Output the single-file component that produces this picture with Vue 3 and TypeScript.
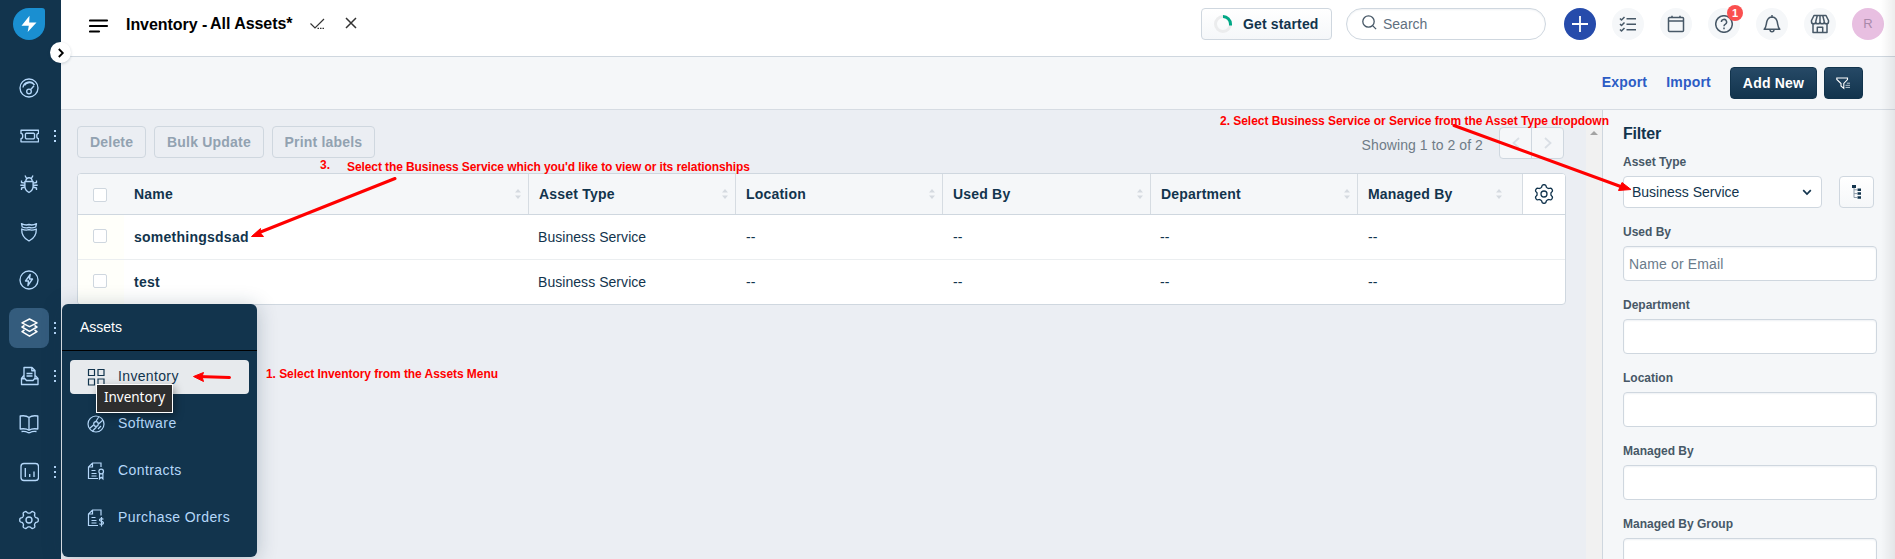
<script setup lang="ts">
interface NavItem {
  name: string
  paths: string[]
  dots?: boolean
  active?: boolean
}
interface MenuItem {
  label: string
  paths: string[]
  active?: boolean
}

// Six-lobed gear outline centred in a 20x20 box.
function gearPath(turn: number): string {
  const points: string[] = []
  for (let i = 0; i < 120; i++) {
    const a = (i / 120) * Math.PI * 2
    const r = 8.1 + 1.2 * Math.tanh(2 * Math.cos(6 * (a - turn)))
    points.push(`${(10 + r * Math.cos(a)).toFixed(2)} ${(10 + r * Math.sin(a)).toFixed(2)}`)
  }
  return `M${points.join('L')}z`
}
const gear = gearPath(Math.PI / 6)
const gearSide = gearPath(0)
const gearHub = 'M13 10a3 3 0 1 1-6 0a3 3 0 1 1 6 0z'

const nav: NavItem[] = [
  {
    name: 'dashboard',
    paths: [
      'M19 10a9 9 0 1 1-18 0a9 9 0 1 1 18 0z',
      'M4 9.5a6.2 6.2 0 0 1 11.5-2.4M5.5 7.5A6 6 0 0 1 14 5.6',
      'M12.3 13.4a2.3 2.3 0 1 1-4.6 0a2.3 2.3 0 1 1 4.6 0zM11.6 11.7l3.4-3.9',
    ],
  },
  {
    name: 'tickets',
    dots: true,
    paths: [
      'M2 4.2h17.500v3.2a1.6 2.4 0 0 0 0 5.2v3.2H2v-3.2a1.6 2.4 0 0 0 0-5.2z',
      'M7.200 7.2h7.500l.8.8v4l-.8.8H7.200l-.8-.8V8z',
    ],
  },
  {
    name: 'problems',
    paths: [
      'M5.9 7.5h8.200v5c0 2.500-1.900 4.800-4.100 6-2.200-1.200-4.100-3.500-4.100-6z',
      'M6.800 7.300a3.200 3.600 0 0 1 6.400 0M6 1.500l1.600 3M14 1.500l-1.600 3',
      'M5.900 9.200L2.500 8.500V6.500M5.900 11.200H1.300M5.900 13L2.500 14v2M14.100 9.200l3.400-.7v-2M14.100 11.200h4.600M14.100 13l3.400 1v2',
    ],
  },
  {
    name: 'changes',
    paths: [
      'M2.500 1.700q4 2 7.500.800q3.500 1.200 7.500-.800l-.8 3.300q-3.500 1.500-6.700.4q-3.200 1.100-6.700-.4z',
      'M2.700 7q3.800 1.800 7.300.700q3.500 1.100 7.300-.700c.2 5-2.300 9.500-7.300 12c-5-2.500-7.500-7-7.300-12z',
    ],
  },
  {
    name: 'releases',
    paths: [
      'M19 10a9 9 0 1 1-18 0a9 9 0 1 1 18 0z',
      'M11.200 4.500L6.500 11h3l-.6 4.500L13.500 9h-3z',
    ],
  },
  {
    name: 'assets',
    dots: true,
    active: true,
    paths: [
      'M10.500 1l7.500 3.800l-7.500 3.800L3 4.800z',
      'M5.500 7.500L3 9l7.500 4.300L18 9l-2.500-1.500',
      'M5.500 12L3 13.600l7.500 4.600l7.500-4.600L15.500 12',
    ],
  },
  {
    name: 'printing',
    dots: true,
    paths: [
      'M5 12V1.500h8l3 3V12M12.800 1.700v3h3',
      'M4.800 9.500L2.500 12.500v6h16.500v-6L16.200 9.500M2.500 12.700H6l1.500 1.800h6.500l1.500-1.800H19',
      'M7.500 7.500h6M7.500 10h6',
    ],
  },
  {
    name: 'solutions',
    paths: [
      'M10 3.500C8 1.800 4.500 1.500 1.200 2v13c3.300-.5 6.800-.2 8.800 1.300c2-1.500 5.500-1.800 8.800-1.300V2C15.500 1.500 12 1.800 10 3.500zM10 3.500V16',
      'M2.500 17.500q4-.5 6 .8q1.500.8 3 0q2-1.300 6-.8',
    ],
  },
  {
    name: 'reports',
    dots: true,
    paths: [
      'M5 1.500h11.500a3 3 0 0 1 3 3v11a3 3 0 0 1-3 3H5a3 3 0 0 1-3-3v-11a3 3 0 0 1 3-3z',
      'M6.300 6v9M10.700 12v3M15 9.500V15',
    ],
  },
  { name: 'admin', paths: [gearSide, gearHub] },
]

const menu: MenuItem[] = [
  {
    label: 'Inventory',
    active: true,
    paths: ['M2.500 2.500H8.500v6H2.500zM12 2.500h6v6h-6zM2.500 12h6v6H2.500zM12 12h6v6h-6z'],
  },
  {
    label: 'Software',
    paths: [
      'M18 10a8 8 0 1 1-16 0a8 8 0 1 1 16 0z',
      'M3.500 14.500l4-3.500M6.500 17l4-4M9.500 8L13 2.500M12.500 10l4.500-4M12 15l3-3',
      'M12.300 10a2.300 2.300 0 1 1-4.600 0a2.300 2.300 0 1 1 4.600 0z',
    ],
  },
  {
    label: 'Contracts',
    paths: [
      'M12 17.500H2.500V6L6.500 2h8.500v4M6.500 2v4H2.500M5.500 9.500h4M5.500 12.500h5M5.500 15h5',
      'M17.500 10.500a2.300 2.300 0 1 1-4.600 0a2.300 2.300 0 1 1 4.600 0zM13.500 12.800v5l1.700-1.500l1.700 1.500v-5',
    ],
  },
  {
    label: 'Purchase Orders',
    paths: [
      'M12 17.500H2.500V6L6.500 2h8.500v5.500M6.500 2v4H2.500M5.500 9.500h4M5.500 12.500h5M5.500 15h5',
      'M17.500 11.300q-2.500-1.300-3.800 0q-.7 1.500 1.900 2.100q2.500.7 1.600 2.300q-1.500 1.300-3.800 0M15.500 9v9.500',
    ],
  },
]

const columns = ['Name', 'Asset Type', 'Location', 'Used By', 'Department', 'Managed By']
const rows = [
  ['somethingsdsad', 'Business Service', '--', '--', '--', '--'],
  ['test', 'Business Service', '--', '--', '--', '--'],
]
const bulkActions = ['Delete', 'Bulk Update', 'Print labels']
const filters = [
  { label: 'Used By', placeholder: 'Name or Email' },
  { label: 'Department', placeholder: '' },
  { label: 'Location', placeholder: '' },
  { label: 'Managed By', placeholder: '' },
  { label: 'Managed By Group', placeholder: '' },
]
</script>

<template>
  <div class="app">
    <aside class="sidebar">
      <svg class="logo" width="32" height="32" viewBox="0 0 32 32">
        <path d="M16 0h13a3 3 0 0 1 3 3v13a16 16 0 1 1-16-16z" fill="#1a8fd1" />
        <path d="M16.500 7.800L8.500 17.800h7.300L14.700 24L23.500 14.500h-7.300z" fill="#fff" />
      </svg>
      <nav>
        <div v-for="n in nav" :key="n.name" class="nav-item">
          <span class="nav-box" :class="{ active: n.active }">
            <svg width="20" height="20" viewBox="0 0 20 20"><path v-for="d in n.paths" :key="d" :d="d" /></svg>
          </span>
          <span v-if="n.dots" class="dots"><i /><i /><i /></span>
        </div>
      </nav>
    </aside>

    <div class="main">
      <header class="topbar">
        <svg class="burger" width="20" height="14" viewBox="0 0 20 14">
          <path d="M1 1.500h17M1 7h17M1 12.500h9" stroke="#000" stroke-width="2.200" stroke-linecap="round" />
        </svg>
        <h1>Inventory - <span>All Assets*</span></h1>
        <svg class="tick" width="15" height="12" viewBox="0 0 15 12">
          <path d="M.5 5.500l4.500 4.500L14 1" fill="none" stroke="#333" stroke-width="1.200" />
          <path d="M7.500 10.300h7" stroke="#333" stroke-width="1.200" stroke-dasharray="1.500 1" />
        </svg>
        <svg class="cross" width="12" height="12" viewBox="0 0 12 12">
          <path d="M1 1l10 10M11 1L1 11" stroke="#333" stroke-width="1.500" />
        </svg>
        <div class="grow" />
        <button class="started">
          <svg width="18" height="18" viewBox="0 0 18 18">
            <circle cx="9" cy="9" r="7.500" fill="none" stroke="#ebeced" stroke-width="3" />
            <path d="M9 1.500A7.500 7.500 0 0 1 16.500 9v1.500" fill="none" stroke="#00a886" stroke-width="3" />
          </svg>
          Get started
        </button>
        <div class="search">
          <svg width="15" height="15" viewBox="0 0 15 15">
            <circle cx="6.500" cy="6.500" r="5.700" fill="none" stroke="#475867" stroke-width="1.300" />
            <path d="M10.600 10.600l3.500 3.500" stroke="#475867" stroke-width="1.300" />
          </svg>
          Search
        </div>
        <div class="rounds">
          <span class="round plus">
            <svg width="18" height="18" viewBox="0 0 18 18"><path d="M9 1v16M1 9h16" /></svg>
          </span>
          <span class="round">
            <svg width="18" height="18" viewBox="0 0 18 18">
              <path d="M1 3.500l1.500 1.500L5.500 2M1 9l1.500 1.500L5.500 7.500M1 14.500L2.500 16l3-3M7.500 3.800H17M7.500 9.300H17M7.500 14.800H17" />
            </svg>
          </span>
          <span class="round">
            <svg width="18" height="18" viewBox="0 0 18 18">
              <path d="M2.500 2.500h13a1 1 0 0 1 1 1v12a1 1 0 0 1-1 1h-13a1 1 0 0 1-1-1v-12a1 1 0 0 1 1-1zM1.500 6h15M5 .8V3M13 .8V3" />
            </svg>
          </span>
          <span class="round">
            <svg width="18" height="18" viewBox="0 0 18 18">
              <path d="M17.300 9A8.300 8.300 0 1 1 .7 9A8.300 8.300 0 1 1 17.300 9zM6.400 7a2.600 2.600 0 1 1 3.800 2.300q-1.200.6-1.200 1.900M9 12.500v1.800" />
            </svg>
            <b class="badge">1</b>
          </span>
          <span class="round">
            <svg width="18" height="18" viewBox="0 0 18 18">
              <path d="M1.200 14.300h15.600C14.500 12 15 9 14 6Q12.800 2.200 9 2Q5.200 2.200 4 6C3 9 3.500 12 1.200 14.300zM9 0v2M7 14.500q0 2.300 2 2.300t2-2.300" />
            </svg>
          </span>
          <span class="round">
            <svg width="20" height="20" viewBox="0 0 20 20">
              <path d="M4 1.500h12l2.500 5v1.200a2.100 2.100 0 0 1-4.250 0a2.100 2.100 0 0 1-4.250 0a2.100 2.100 0 0 1-4.250 0a2.100 2.100 0 0 1-4.250 0V6.500zM3 10v8.500h14V10M7.300 18.500v-5.300h5.400v5.300M7.300 1.500L5.750 7.500M12.700 1.500l1.550 6M10 1.500v6" />
            </svg>
          </span>
          <span class="round avatar">R</span>
        </div>
      </header>

      <div class="toolbar">
        <a>Export</a>
        <a>Import</a>
        <button class="dark add">Add New</button>
        <button class="dark funnel">
          <svg width="15" height="13" viewBox="0 0 15 13">
            <path d="M.8 1h10.700v1.500L7.800 6.500v4.800L5 9V6.500L.8 2.500z" fill="none" stroke="#fff" stroke-width="1.100" />
            <path d="M10.800 6.200H14M9.500 8.300H14M9.500 10.400H14" fill="none" stroke="#b9c6d1" />
          </svg>
        </button>
      </div>

      <div class="body">
        <section class="content">
          <div class="actions">
            <button v-for="a in bulkActions" :key="a">{{ a }}</button>
            <div class="grow" />
            <span class="count">Showing 1 to 2 of 2</span>
            <div class="pager">
              <span><svg width="8" height="12" viewBox="0 0 8 12"><path d="M7 1L1.500 6L7 11" /></svg></span>
              <span><svg width="8" height="12" viewBox="0 0 8 12"><path d="M1 1l5.500 5L1 11" /></svg></span>
            </div>
          </div>
          <div class="table">
            <div class="tr head">
              <div class="check"><i /></div>
              <div v-for="c in columns" :key="c" class="th">
                {{ c }}
                <svg width="6" height="12" viewBox="0 0 6 12"><path d="M0 4.500L3 1l3 3.500zM0 7.500L3 11l3-3.500z" fill="#d5dae0" /></svg>
              </div>
              <div class="cog">
                <svg width="20" height="20" viewBox="0 0 20 20">
                  <path :d="gear" /><path :d="gearHub" />
                </svg>
              </div>
            </div>
            <div v-for="r in rows" :key="r[0]" class="tr">
              <div class="check"><i /></div>
              <div v-for="(v, i) in r" :key="i" class="td">{{ v }}</div>
              <div />
            </div>
          </div>
        </section>
        <div class="scrollbar"><i /></div>
        <aside class="filter">
          <h2>Filter</h2>
          <label>Asset Type</label>
          <div class="select-row">
            <div class="select">
              Business Service
              <svg width="10" height="7" viewBox="0 0 10 7"><path d="M1.200 1.200L5 5l3.800-3.800" fill="none" stroke="#12344d" stroke-width="1.700" /></svg>
            </div>
            <button class="tree">
              <svg width="11" height="14" viewBox="0 0 11 14">
                <path d="M0 0h4v3H0zM5.500 3.500H9v2.500H5.500zM5.500 7.300H9v2.500H5.500zM5.500 11.200H9v2.500H5.500z" fill="#12344d" />
                <path d="M2 3v9.500h3.500M2 4.800h3.500M2 8.600h3.500" fill="none" stroke="#8d9ba8" />
              </svg>
            </button>
          </div>
          <template v-for="f in filters" :key="f.label">
            <label>{{ f.label }}</label>
            <div class="input">{{ f.placeholder }}</div>
          </template>
        </aside>
      </div>
    </div>

    <div class="expand">
      <svg width="8" height="10" viewBox="0 0 8 10"><path d="M1.800 1l4 4l-4 4" fill="none" stroke="#000" stroke-width="1.800" /></svg>
    </div>

    <div class="flyout">
      <div class="fly-title">Assets</div>
      <div class="fly-list">
        <div v-for="m in menu" :key="m.label" class="fly-item" :class="{ on: m.active }">
          <svg width="20" height="20" viewBox="0 0 20 20"><path v-for="d in m.paths" :key="d" :d="d" /></svg>
          {{ m.label }}
        </div>
      </div>
    </div>
    <div class="tooltip">Inventory</div>

    <svg class="notes" width="1895" height="559" viewBox="0 0 1895 559">
      <g>
        <text x="266" y="378" textLength="232">1. Select Inventory from the Assets Menu</text>
        <text x="1220" y="125" textLength="389">2. Select Business Service or Service from the Asset Type dropdown</text>
        <text x="320" y="169">3.</text>
        <text x="347" y="171" textLength="403">Select the Business Service which you'd like to view or its relationships</text>
      </g>
      <path class="line" d="M229.500 377.500L198 376.500M395 178.500L258 233M1454 125.500L1622 187" />
      <path class="tip" d="M193.500 376.500L203.500 372.500L202 376.500L203.500 381.500zM251.500 236.500L260.500 228.500L260 232.500L263.500 236.500zM1631 189.500L1622 182.500L1618.500 190.500z" />
    </svg>
    <div class="edge" />
  </div>
</template>

<style>
body { margin: 0; overflow: hidden; }
</style>

<style scoped>
* { box-sizing: border-box; }
.app {
  position: relative; display: flex; width: 1895px; height: 559px; overflow: hidden;
  font: 14px/20px "Liberation Sans", Arial, sans-serif; color: #12344d; background: #ebeef3;
}
button { font: inherit; font-weight: 700; color: inherit; margin: 0; letter-spacing: .2px; }
svg { display: block; flex: none; }
.grow { flex: 1; }
.sidebar { width: 61px; flex: none; background: #12344d; padding-top: 8px; }
.logo { margin-left: 13px; }
nav { margin-top: 24px; }
.nav-item { height: 48px; display: flex; align-items: center; padding-left: 9px; }
.nav-box { width: 40px; height: 40px; border-radius: 8px; display: flex; align-items: center; justify-content: center; }
.nav-box svg { fill: none; stroke: #b5d8fa; stroke-width: 1.35; stroke-linejoin: round; }
.nav-box.active { background: #345c7d; }
.nav-box.active svg { stroke: #fff; stroke-width: 1.5; }
.dots { margin-left: 5px; display: flex; flex-direction: column; gap: 3px; }
.dots i { width: 2px; height: 2px; background: #b5d8fa; }
.main { flex: 1; min-width: 0; display: flex; flex-direction: column; }
.topbar { height: 57px; flex: none; background: #fff; border-bottom: 1px solid #cfd7df; display: flex; align-items: flex-start; padding: 8px 11px 0 27px; }
.burger { margin: 11px 0 0 1px; }
h1 { margin: 7px 0 0 17px; width: 181px; font-size: 16px; line-height: 20px; letter-spacing: -.05px; color: #000; white-space: nowrap; }
h1 span { position: relative; top: -1px; left: -1px; }
.tick { margin: 10px 0 0 3px; }
.cross { margin: 9px 0 0 20px; }
.started { width: 131px; height: 32px; border: 1px solid #cfd7df; border-radius: 4px; background: linear-gradient(#fff, #f5f7f9); padding: 0 0 0 12px; display: flex; align-items: center; gap: 11px; white-space: nowrap; letter-spacing: .15px; }
.search { margin-left: 14px; width: 200px; height: 32px; border: 1px solid #cfd7df; border-radius: 16px; display: flex; align-items: center; padding-left: 15px; gap: 6px; color: #5f7080; box-shadow: inset 0 1px 2px #f0f2f4; }
.search svg { margin-top: -3px; }
.rounds { margin-left: 18px; display: flex; gap: 16px; }
.round { position: relative; width: 32px; height: 32px; border-radius: 50%; background: #f5f7f9; display: flex; align-items: center; justify-content: center; }
.round svg { fill: none; stroke: #475867; stroke-width: 1.5; stroke-linejoin: round; }
.plus { background: #264bab; }
.plus svg { stroke: #fff; stroke-width: 1.8; }
.avatar { background: #e8bfe1; color: #a98aab; font-size: 13px; }
.badge { position: absolute; top: -3px; left: 19px; width: 16px; height: 16px; border-radius: 50%; background: #fa4f4f; color: #fff; font-size: 11px; line-height: 16px; text-align: center; }
.toolbar { height: 53px; flex: none; background: #f5f7f9; border-bottom: 1px solid #d6dce3; display: flex; align-items: center; justify-content: flex-end; padding-right: 32px; }
.toolbar a { color: #2c5cc5; font-weight: 700; letter-spacing: .2px; margin-right: 19px; position: relative; top: -1px; }
.dark { height: 32px; border: 1px solid #12344d; border-radius: 4px; background: linear-gradient(#264966, #12344d); color: #fff; display: flex; align-items: center; justify-content: center; padding: 0; }
.add { width: 87px; }
.funnel { width: 39px; margin-left: 7px; }
.body { flex: 1; min-height: 0; display: flex; }
.content { width: 1525px; flex: none; padding: 16px 20px 0 16px; }
.actions { display: flex; height: 32px; gap: 8px; }
.actions button { border: 1px solid #cfd7df; border-radius: 4px; background: none; color: #92a2b1; padding: 0 12px; }
.actions button:first-child { width: 69px; }
.actions button:nth-child(3) { width: 103px; padding: 0; }
.count { color: #6f7c87; padding-top: 9px; margin-right: 8px; letter-spacing: .08px; }
.pager { display: flex; width: 65px; height: 32px; margin: 1px 2px 0 0; border: 1px solid #cfd7df; border-radius: 4px; background: #f5f7f9; }
.pager span { flex: 1; display: flex; align-items: center; justify-content: center; }
.pager span + span { border-left: 1px solid #cfd7df; }
.pager path { fill: none; stroke: #dadfe5; stroke-width: 1.8; }
.table { margin-top: 15px; border: 1px solid #cfd7df; border-radius: 4px; background: #fff; overflow: hidden; }
.tr { display: grid; grid-template-columns: 46px 405px 207px 207px 208px 207px 165px 42px; height: 45px; border-bottom: 1px solid #ebeef0; }
.tr:last-child { height: 44px; border-bottom: 0; }
.tr.head { height: 41px; background: #f5f7f9; border-bottom-color: #cfd7df; }
.check { padding: 14px 0 0 15px; background: #fffffa; }
.head .check { background: none; }
.check i { display: block; width: 14px; height: 14px; border: 1px solid #cfd7df; border-radius: 2px; background: #fff; }
.th { display: flex; align-items: center; justify-content: space-between; font-weight: 700; letter-spacing: .2px; padding: 0 7px 0 10px; border-right: 1px solid #d6dce2; }
.th:nth-child(7) { padding-right: 20px; }
.td { display: flex; align-items: center; padding-left: 10px; }
.td:nth-child(3), .td:nth-child(6) { padding-left: 9px; }
.td:nth-child(2) { font-weight: 700; letter-spacing: .25px; }
.td:nth-child(3) { letter-spacing: .05px; }
.cog { background: #fff; display: flex; align-items: center; justify-content: center; }
.cog svg { fill: none; stroke: #12344d; stroke-width: 1.3; stroke-linejoin: round; }
.scrollbar { width: 16px; flex: none; background: #f1f1f1; padding: 21px 0 0 4px; }
.scrollbar i { display: block; width: 0; border: 4px solid transparent; border-top: 0; border-bottom-color: #a3a3a3; }
.filter { flex: 1; min-width: 0; background: #f5f7f9; border-left: 1px solid #cfd7df; padding: 14px 18px 0 20px; }
h2 { margin: 0 0 9px; font-size: 16px; line-height: 20px; letter-spacing: -.2px; }
label { display: block; font-size: 12px; line-height: 18px; font-weight: 700; color: #475867; margin-bottom: 5px; }
.select-row { display: flex; gap: 17px; height: 32px; margin: 5px 0 15px; }
.select { width: 199px; border: 1px solid #cfd7df; border-radius: 4px; background: #fff; display: flex; align-items: center; justify-content: space-between; padding: 0 9px 0 8px; }
.tree { width: 35px; border: 1px solid #cfd7df; border-radius: 4px; background: linear-gradient(#fff, #f5f7f9); padding: 0 0 0 2px; display: flex; align-items: center; justify-content: center; }
.input { width: 254px; height: 35px; margin-bottom: 15px; border: 1px solid #cfd7df; border-radius: 4px; background: #fff; box-shadow: inset 0 1px 2px #eef1f4; padding: 7px 5px; color: #6a7b8b; letter-spacing: .15px; }
.expand { position: absolute; left: 50px; top: 42px; width: 21px; height: 21px; border-radius: 50%; background: #fff; box-shadow: 0 1px 3px rgba(18, 52, 77, .2); display: flex; align-items: center; justify-content: center; }
.flyout { position: absolute; left: 62px; top: 304px; width: 195px; height: 253px; border-radius: 6px; background: #12344d; box-shadow: 0 2px 20px rgba(18, 52, 77, .25); }
.fly-title { height: 47px; border-bottom: 1px solid #000; color: #fff; padding: 13px 18px; }
.fly-list { padding: 9px 8px 0; display: grid; gap: 13px; }
.fly-item { height: 34px; border-radius: 4px; display: flex; align-items: center; gap: 12px; padding: 0 0 2px 16px; color: #b5d8fa; letter-spacing: .42px; font-size: 14px; white-space: nowrap; }
.fly-item svg { margin-top: 2px; fill: none; stroke: #b5d8fa; stroke-width: 1.2; }
.fly-item.on { background: #e7eaed; color: #12344d; letter-spacing: .35px; }
.fly-item.on svg { stroke: #12344d; }
.tooltip { position: absolute; left: 96px; top: 384px; width: 77px; height: 29px; border: 1px solid #fff; background: #2e2e2e; color: #fff; font: 13.5px/25px "Noto Sans", "Open Sans", sans-serif; text-align: center; box-shadow: 2px 3px 8px rgba(0, 0, 0, .35); }
.notes { position: absolute; left: 0; top: 0; pointer-events: none; }
.notes text { fill: #f00; font-size: 12px; font-weight: 700; }
.line { fill: none; stroke: #f00; stroke-width: 3; stroke-linecap: round; }
.tip { fill: #f00; stroke: #f00; stroke-linejoin: round; }
.edge { position: absolute; right: 0; top: 0; width: 14px; height: 559px; background: linear-gradient(90deg, transparent, rgba(0, 0, 0, .07)); }
</style>
